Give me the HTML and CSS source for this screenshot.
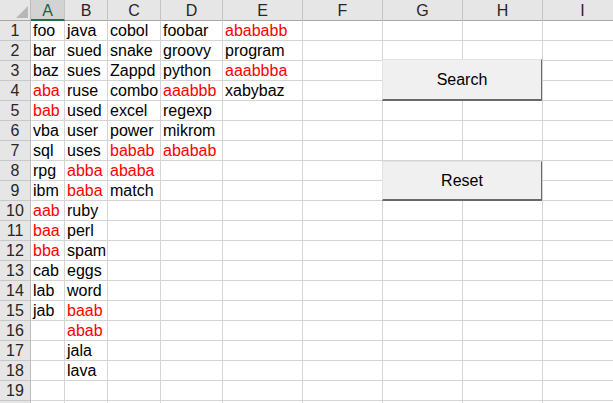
FILE: index.html
```html
<!DOCTYPE html>
<html lang="en">

<head>
  <meta charset="UTF-8">
  <meta name="viewport" content="width=device-width, initial-scale=1.0">
  <title>Sheet1</title>

  <link rel="stylesheet" href="styles.css">
</head>

<body>
  <div class="sheet">
    <div class="grid"></div>

    <button class="btn btn-search">Search</button>
    <button class="btn btn-reset">Reset</button>
  </div>

  <script>
    // "!" in front of a word = red text
    const cols = {
      A: ['foo', 'bar', 'baz', '!aba', '!bab', 'vba', 'sql', 'rpg', 'ibm', '!aab', '!baa', '!bba', 'cab', 'lab', 'jab'],
      B: ['java', 'sued', 'sues', 'ruse', 'used', 'user', 'uses', '!abba', '!baba', 'ruby', 'perl', 'spam', 'eggs', 'word', '!baab', '!abab', 'jala', 'lava'],
      C: ['cobol', 'snake', 'Zappd', 'combo', 'excel', 'power', '!babab', '!ababa', 'match'],
      D: ['foobar', 'groovy', 'python', '!aaabbb', 'regexp', 'mikrom', '!ababab'],
      E: ['!abababb', 'program', '!aaabbba', 'xabybaz']
    }
    const letters = ['A', 'B', 'C', 'D', 'E', 'F', 'G', 'H', 'I']
    const grid = document.querySelector('.grid')

    const cell = (cls, text) => {
      const el = document.createElement('div')
      el.className = cls
      el.textContent = text || ''
      grid.appendChild(el)
      return el
    }

    cell('corner')
    letters.forEach(l => cell(l === 'A' ? 'col-head active' : 'col-head', l))

    // row 20 only peeks in at the bottom edge, so no label for it
    for (let r = 1; r <= 20; r++) {
      cell('row-head', r < 20 ? r : '')
      letters.forEach(l => {
        let v = (cols[l] || [])[r - 1] || ''
        const red = v.startsWith('!')
        if (red) v = v.slice(1)
        cell(red ? 'cell red' : 'cell', v)
      })
    }
  </script>
</body>

</html>
```

FILE: styles.css
```css
* {
  margin: 0;
  padding: 0;
  box-sizing: border-box;
}

body {
  background: #fff;
  overflow: hidden;
  font-family: "Liberation Sans", Arial, sans-serif;
}

.sheet {
  position: relative;
  width: 613px;
  height: 403px;
  overflow: hidden;
}

.grid {
  display: grid;
  grid-template-columns: 31px 34px 43px 53px 62px 80px 80px 80px 80px 80px;
  grid-auto-rows: 20px;
  grid-template-rows: 21px;
}

.cell {
  border-right: 1px solid #d4d4d4;
  border-bottom: 1px solid #d4d4d4;
  font-size: 16px;
  line-height: 19px;
  padding-left: 2px;
  color: #000;
  white-space: nowrap;
  overflow: visible;
}

.red {
  color: #ff0000;
}

.corner {
  position: relative;
  background: #e6e6e6;
  border-right: 1px solid #bcbcbc;
  border-bottom: 1px solid #a8a8a8;
}

.corner::after {
  content: '';
  position: absolute;
  right: 2px;
  bottom: 2px;
  width: 12px;
  height: 12px;
  background: #b7b7b7;
  clip-path: polygon(100% 0, 100% 100%, 0 100%);
}

.col-head {
  background: #e6e6e6;
  border-right: 1px solid #c4c4c4;
  border-bottom: 1px solid #a8a8a8;
  color: #262626;
  font-size: 16px;
  line-height: 18px;
  padding-top: 2px;
  text-align: center;
}

.col-head.active {
  background: #d3d3d3;
  color: #1e5f3a;
  border-bottom: 2px solid #217346;
}

.row-head {
  background: #e6e6e6;
  border-right: 1px solid #bcbcbc;
  border-bottom: 1px solid #c8c8c8;
  color: #262626;
  font-size: 16px;
  line-height: 19px;
  text-align: center;
}

.btn {
  position: absolute;
  left: 382px;
  width: 160px;
  background: #f0f0f0;
  border: none;
  border-left: 1px solid #e3e3e3;
  border-top: 1px solid #e3e3e3;
  border-right: 1px solid #696969;
  border-bottom: 2px solid #696969;
  font-family: "Liberation Sans", Arial, sans-serif;
  font-size: 16px;
  color: #000;
}

.btn-search {
  top: 59px;
  height: 42px;
}

.btn-reset {
  top: 161px;
  height: 40px;
}
```
